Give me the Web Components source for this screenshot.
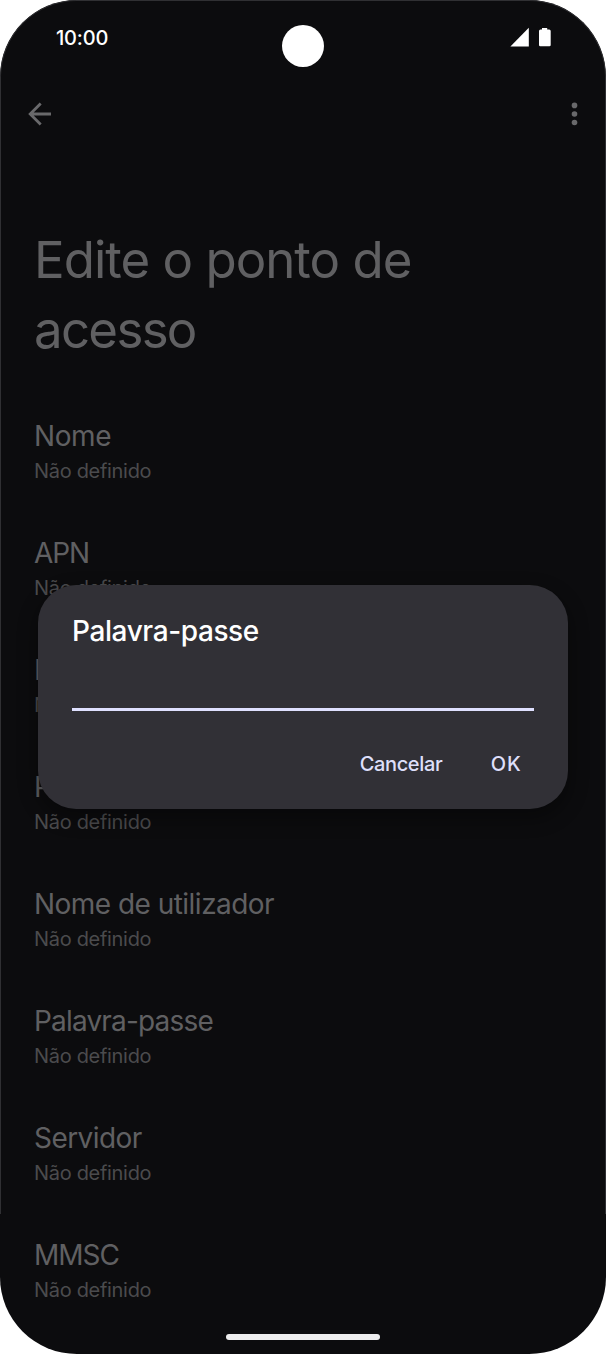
<!DOCTYPE html>
<html lang="pt"><head><meta charset="utf-8"><title>Edite o ponto de acesso</title>
<style>html,body{margin:0;background:#fff}body{font-family:Inter,"Open Sans",sans-serif}page-title .second{letter-spacing:-1.7px}</style></head>
<body>
<phone-frame>
<status-bar time="10:00"></status-bar>
<app-bar></app-bar>
<page-title><span>Edite o ponto de</span><span class="second">acesso</span></page-title>
<settings-list>
<setting-row style="--ls:-.4px">Nome</setting-row>
<setting-row style="--ls:-1.1px">APN</setting-row>
<setting-row>Proxy</setting-row>
<setting-row>Porta</setting-row>
<setting-row style="--ls:-.53px">Nome de utilizador</setting-row>
<setting-row style="--ls:-.82px">Palavra-passe</setting-row>
<setting-row style="--ls:-.57px">Servidor</setting-row>
<setting-row style="--ls:-1px">MMSC</setting-row>
</settings-list>
<text-dialog slot="overlay" heading="Palavra-passe"></text-dialog>
</phone-frame>
<script>
const define=(name,html,setup)=>customElements.define(name,class extends HTMLElement{
constructor(){super();this.attachShadow({mode:'open'}).innerHTML=html}
connectedCallback(){if(setup)setup(this,this.shadowRoot)}});
define('phone-frame',`<style>
:host{display:flex;flex-direction:column;position:relative;box-sizing:border-box;width:606px;height:1354px;border-radius:77px;background:#0c0c0e;overflow:hidden}
.edge{position:absolute;inset:0 0 140px;border:1px solid #303033;border-bottom:0;border-radius:77px 77px 0 0;pointer-events:none}
.home{position:absolute;left:226px;bottom:14px;width:153.5px;height:6px;border-radius:3px;background:#ededee}
</style><slot></slot><div class="edge"></div><div class="home"></div><slot name="overlay"></slot>`);
define('status-bar',`<style>
:host{display:grid;grid-template-columns:1fr 42px 1fr;height:76px;box-sizing:border-box;padding:0 55px 0 54px;color:#fff}
time{font-size:20px;font-weight:500;line-height:24px;padding:26px 0 0 2px;letter-spacing:-.2px}
i{width:42px;height:42px;border-radius:50%;background:#fff;margin-top:25px}
svg{justify-self:end;margin-top:27px}
</style><time></time><i></i><svg width="41" height="20" fill="#fff"><path d="M.4 19.6 18.8.8V19.6Z"/><path d="M32 .9h5.2v1.6H39.2q1.5 0 1.5 1.5V18q0 1.3-1.3 1.3H30.3Q29 19.3 29 18V4q0-1.5 1.5-1.5H32Z"/></svg>`,(e,r)=>r.querySelector('time').textContent=e.getAttribute('time'));
define('app-bar',`<style>
:host{display:flex;justify-content:space-between;align-items:center;height:76px;padding:0 27px 0 28px}
</style><svg width="24" height="24" fill="none" stroke="#69696b" stroke-width="2.8"><path d="M12.7 1.5 2.2 12 12.7 22.5M2.3 12H23"/></svg><svg width="9" height="24" fill="#69696b"><circle cx="4.5" cy="3.4" r="2.8"/><circle cx="4.5" cy="12" r="2.8"/><circle cx="4.5" cy="20.5" r="2.8"/></svg>`);
define('page-title',`<style>
:host{display:flex;flex-direction:column;padding:73px 34px 0;height:175px;font-size:51px;line-height:70px;letter-spacing:-1px;color:#606062;white-space:nowrap}
</style><slot></slot>`);
define('settings-list',`<style>:host{display:grid;grid-auto-rows:117px;padding:16px 34px 0}</style><slot></slot>`);
define('setting-row',`<style>
:host{display:block;white-space:nowrap}
.t{font-size:28px;line-height:36px;padding-top:2px;color:#606062;letter-spacing:var(--ls,-.7px)}
.s{font-size:20px;line-height:26px;padding-top:4px;color:#4b4b4d;letter-spacing:-.31px}
</style><div class="t"><slot></slot></div><div class="s">Não definido</div>`);
define('text-dialog',`<style>
:host{position:absolute;left:38px;top:585px;width:530px;height:224px;box-sizing:border-box;padding:28px 34px 0;border-radius:38px;background:#313036;box-shadow:0 8px 18px 3px rgba(0,0,0,.32);color:#fff;display:flex;flex-direction:column}
h2{margin:0;font-size:28px;font-weight:500;line-height:36px;letter-spacing:-.4px;white-space:nowrap}
.field{height:59px;border-bottom:3px solid #dfe0ff}
footer{display:flex;justify-content:flex-end;gap:48.5px;padding:39px 12.5px 0 0;line-height:28px;font-size:20px;font-weight:500;color:#dedffa}
.c{letter-spacing:-.35px}
.k{letter-spacing:.8px}
</style><h2></h2><div class="field"></div><footer><span class="c">Cancelar</span><span class="k">OK</span></footer>`,(e,r)=>r.querySelector('h2').textContent=e.getAttribute('heading'));
</script></body></html>
